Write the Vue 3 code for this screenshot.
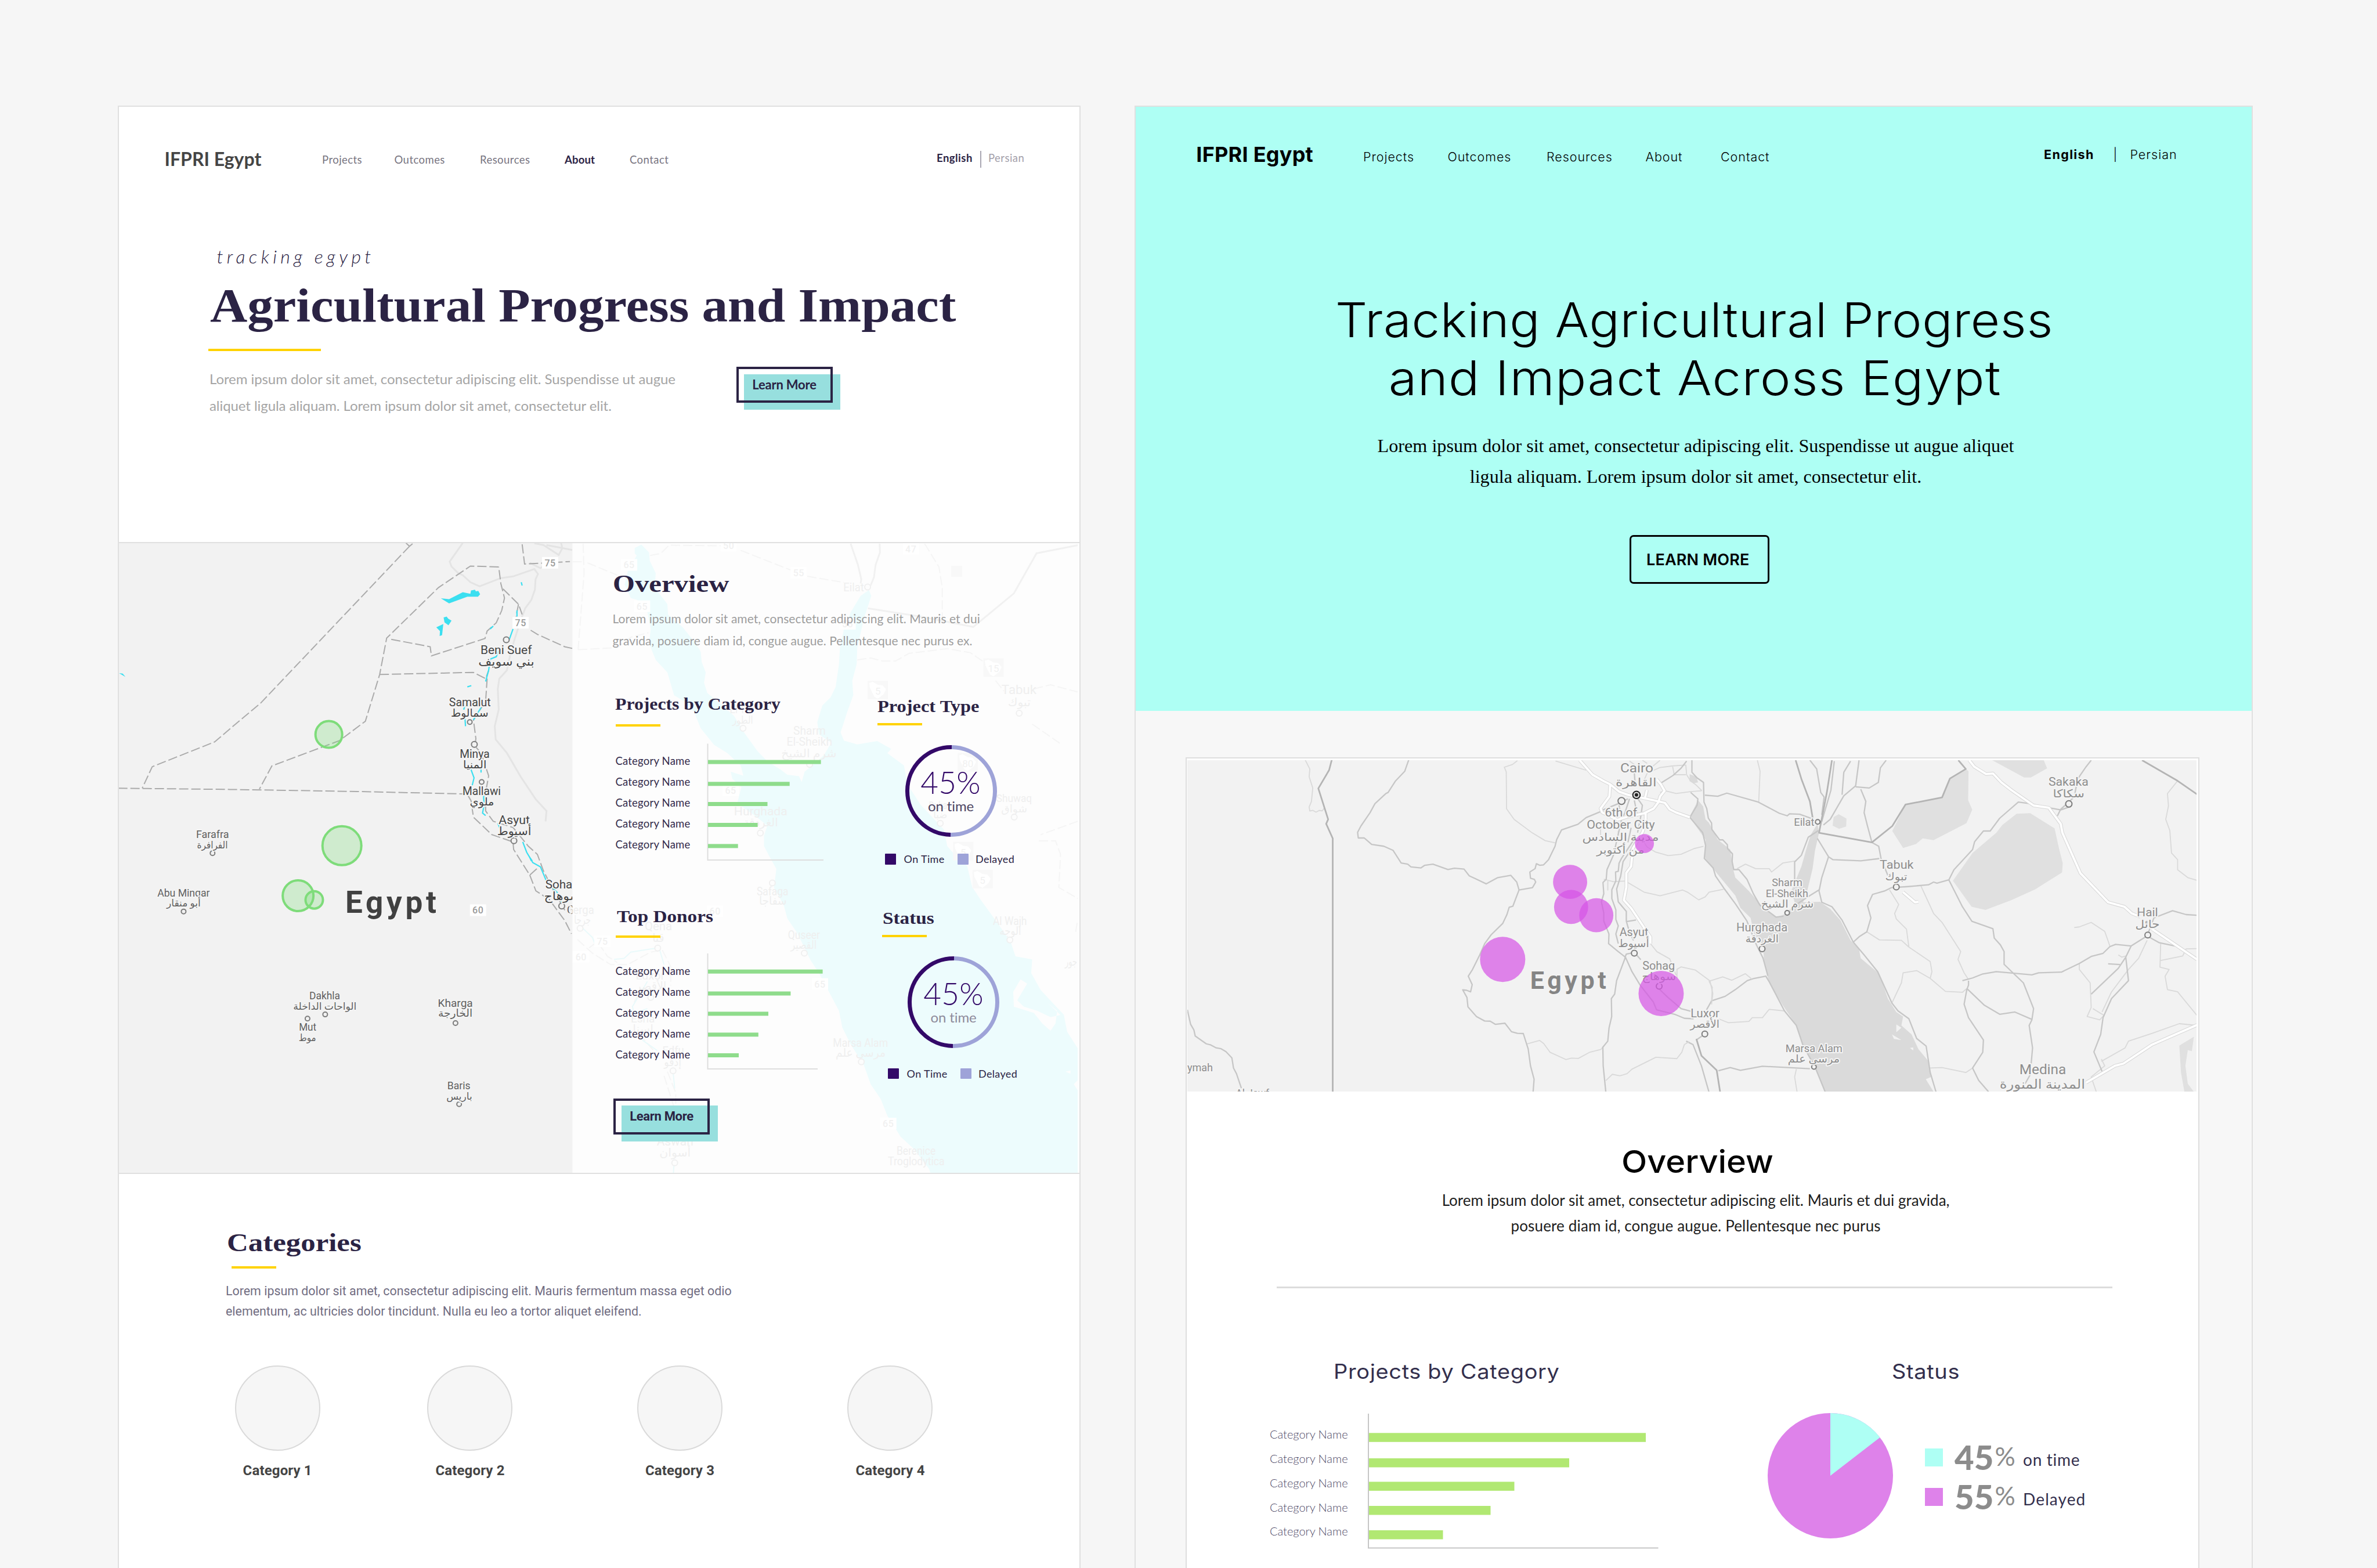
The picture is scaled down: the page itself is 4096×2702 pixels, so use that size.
<script setup>
const nav = ['Projects', 'Outcomes', 'Resources', 'About', 'Contact']

const categoryChart = {
  axis: [1.6, 202, 363],
  rows: [[37.6, 29.6, 194.6], [74, 67.3, 140.7], [110, 102, 102.5], [146, 138, 85.6], [182.3, 174.4, 51.7]],
}
const donorChart = {
  axis: [2, 201, 353],
  rows: [[38.7, 29.7, 197.6], [74.5, 67.5, 142.4], [110.6, 102.4, 104], [146.7, 138.4, 86.8], [182.9, 174, 53]],
}
const projectRows = [[49.3, 39.3, 477.5], [90.8, 83, 345.5], [132.9, 123.4, 251], [175, 165, 210], [216.4, 207, 128]]
const categories = ['Category 1', 'Category 2', 'Category 3', 'Category 4']

// Map tiles: origin x, origin y, scale x, scale y
const tiles = {
  west: [186.3, 923.5, 0.5246, 0.7127],
  north: [977.8, 923.5, 0.5741, 0.35634],
  south: [977.8, 1474.5, 0.5741, 0.36129],
  libya: [2033.3, 1288.2, 0.56422, 0.38605],
  arabia: [2902.4, 1288.2, 0.58402, 0.38605],
  nile: [2638.6, 1296, 0.27716, 0.27716],
}
const tf = (t) => `translate(${tiles[t][0]} ${tiles[t][1]}) scale(${tiles[t][2]} ${tiles[t][3]})`
const px = (t, x) => tiles[t][0] + x * tiles[t][2]
const py = (t, y) => tiles[t][1] + y * tiles[t][3]
const label = (t, [text, x1, x2, y, size = 20, cls = '']) => ({
  text, cls, size, x: px(t, x1), y: py(t, y), w: (x2 - x1) * tiles[t][2],
})
const dot = (t, [x, y, r = 5]) => ({ x: px(t, x), y: py(t, y), r })

const westLabels = [
  ['Beni Suef', 1223, 1392, 286, 21], ['بني سويف', 1216, 1400, 313, 20],
  ['Samalut', 1120, 1257, 412], ['سمالوط', 1126, 1249, 437, 19],
  ['Minya', 1155, 1253, 537], ['المنيا', 1166, 1243, 562, 19],
  ['Mallawi', 1164, 1290, 627], ['ملوي', 1188, 1268, 652, 19],
  ['Asyut', 1283, 1385, 696, 21], ['أسيوط', 1278, 1390, 723, 20],
  ['Farafra', 289, 397, 731, 18, 'minor'], ['الفرافرة', 292, 393, 755, 17, 'minor'],
  ['Abu Minqar', 162, 334, 872, 18, 'minor'], ['أبو منقار', 192, 304, 896, 17, 'minor'],
  ['Dakhla', 661, 762, 1121, 18, 'minor'], ['الواحات الداخلة', 608, 816, 1145, 17, 'minor'],
  ['Mut', 627, 684, 1196, 18, 'minor'], ['موط', 626, 683, 1221, 17, 'minor'],
  ['Kharga', 1083, 1198, 1138, 19, 'minor'], ['الخارجة', 1084, 1197, 1163, 18, 'minor'],
  ['Baris', 1114, 1190, 1338, 18, 'minor'], ['باريس', 1111, 1196, 1363, 17, 'minor'],
  ['Sohag', 1436, 1547, 852, 21], ['سوهاج', 1432, 1552, 880, 20], ['Gerga', 1507, 1600, 914],
].map((l) => label('west', l))
const westDots = [[1308, 251], [1188, 450, 4], [1203, 504], [1227, 595, 4], [1333, 737], [343, 767, 4], [248, 908, 4], [713, 1157, 4], [655, 1167, 4], [1141, 1178, 4], [1153, 1374, 4], [1490, 895]].map((d) => dot('west', d))
const westBadges = [['75', 1452, 65], ['75', 1355, 210], ['60', 1215, 905]].map(([n, x, y]) => ({ n, x: px('west', x), y: py('west', y) }))
const greenPins = [[725, 480, 23], [768, 749, 33.5], [624, 870, 26.5], [677, 880, 15]].map((d) => dot('west', d))

const faintLabels = [
  ...[
    ['Eilat', 828, 890, 267], ['Tabuk', 1303, 1408, 764, 22], ['تبوك', 1322, 1390, 825],
    ['El Tor', 487, 560, 858, 18], ['الطور', 495, 557, 908, 18],
    ['Sharm', 678, 775, 960], ['El-Sheikh', 658, 795, 1015], ['شرم الشيخ', 642, 808, 1070],
    ['Hurghada', 500, 660, 1350, 21], ['الغردقة', 528, 632, 1405],
    ['Duba', 1085, 1140, 1320, 18], ['ضبا', 1098, 1140, 1365, 18],
    ['Shuwaq', 1287, 1394, 1288, 18], ['شواق', 1302, 1380, 1338, 18],
  ].map((l) => label('north', l)),
  ...[
    ['Safaga', 568, 663, 190], ['سفاجا', 575, 658, 235], ['Quseer', 662, 758, 397], ['القصير', 670, 748, 443],
    ['Qena', 232, 314, 355, 21], ['قنا', 255, 290, 412], ['Luxor', 205, 292, 590, 21], ['الأقصر', 205, 297, 640],
    ['Esna', 190, 262, 797, 19], ['إسنا', 196, 258, 845], ['Edfu', 285, 350, 945, 19], ['إدفو', 290, 342, 1002],
    ['Marsa Alam', 797, 962, 912], ['مرسى علم', 805, 955, 960], ['Al Wajh', 1277, 1379, 332], ['الوجه', 1297, 1362, 378],
    ['Aswan', 268, 378, 1382, 21], ['أسوان', 276, 370, 1435], ['Berenice', 988, 1105, 1428], ['Troglodytica', 962, 1132, 1477],
    ['Gerga', -5, 80, 277], ['جرجا', 20, 70, 325], ['جور', 1493, 1530, 525],
  ].map((l) => label('south', l)),
]
const faintDots = [
  ...[[901, 247], [1356, 857], [527, 930], [727, 1105], [579, 1437], [1119, 1390], [1341, 1360]].map((d) => dot('north', d)),
  ...[[615, 130], [711, 465], [271, 441], [250, 676], [317, 1026], [882, 983], [1328, 402], [322, 1465], [38, 347]].map((d) => dot('south', d)),
]
const faintBadges = [
  ...[['65', 185, 140], ['65', 224, 340], ['50', 484, 46], ['55', 694, 178], ['47', 1031, 62], ['55', 841, 425], ['65', 490, 1230]].map(([n, x, y]) => ({ n, x: px('north', x), y: py('north', y) })),
  ...[['60', 443, 265], ['75', 105, 408], ['60', 41, 482], ['65', 758, 612], ['65', 963, 1278]].map(([n, x, y]) => ({ n, x: px('south', x), y: py('south', y) })),
]
const shields = [
  ...[['15', 1279, 637], ['5', 932, 745], ['80', 1202, 1095], ['5', 1188, 1524]].map(([n, x, y]) => ({ n, x: px('north', x), y: py('north', y) })),
  ...[['5', 1246, 112]].map(([n, x, y]) => ({ n, x: px('south', x), y: py('south', y) })),
]

const eastLabels = [
  ...[
    ['Cairo', 1344, 1445, 111, 22], ['القاهرة', 1330, 1455, 172, 20], ['6th of', 1297, 1396, 307], ['October City', 1242, 1450, 361],
    ['مدينة السادس', 1228, 1462, 416, 19], ['من أكتوبر', 1272, 1418, 472, 19],
    ['Asyut', 1342, 1430, 841], ['أسيوط', 1338, 1432, 891, 19], ['Sohag', 1412, 1511, 990], ['سوهاج', 1410, 1515, 1038, 19],
    ['ymah', 22, 100, 1445, 19], ['Al Jawf', 170, 272, 1558, 19],
  ].map((l) => label('libya', l)),
  ...[
    ['Eilat', 323, 383, 349, 19], ['Sharm', 258, 348, 619, 19], ['El-Sheikh', 240, 365, 667, 19], ['شرم الشيخ', 226, 381, 714, 19],
    ['Hurghada', 153, 304, 821], ['الغردقة', 180, 278, 870, 19], ['Tabuk', 576, 676, 540, 21], ['تبوك', 592, 657, 592, 19],
    ['Sakaka', 1074, 1192, 169, 21], ['سكاكا', 1087, 1180, 221, 19], ['Hail', 1335, 1397, 752, 21], ['حائل', 1330, 1402, 805, 19],
    ['Luxor', 18, 103, 1203], ['الأقصر', 17, 103, 1251, 19], ['Marsa Alam', 298, 466, 1358, 19], ['مرسى علم', 305, 458, 1405, 19],
    ['Medina', 988, 1126, 1458, 23], ['المدينة المنورة', 930, 1182, 1521, 22],
  ].map((l) => label('arabia', l)),
]
const eastDots = [
  ...[[1348, 238, 6], [1387, 917], [1463, 1065]].map((d) => dot('libya', d)),
  ...[[393, 331, 4], [303, 737, 4], [229, 898], [625, 622], [1134, 251, 5.5], [1367, 836], [60, 1278], [382, 1425, 4]].map((d) => dot('arabia', d)),
]
const pinkPins = [[1418, 428, 16.4], [1191, 599, 29.4], [1194, 711, 29.4], [1271, 748, 29.4], [985, 945, 39], [1469, 1097, 39]].map((d) => dot('libya', d))
</script>

<template>
  <main class="page">
    <article class="board board-left">
      <section class="hero">
        <header class="top">
          <strong class="logo">IFPRI Egypt</strong>
          <nav class="links">
            <a v-for="n in nav" :key="n" :class="{ active: n === 'About' }">{{ n }}</a>
          </nav>
          <div class="lang"><b>English</b><i></i><span>Persian</span></div>
        </header>
        <p class="tagline">tracking egypt</p>
        <h1>Agricultural Progress and Impact</h1>
        <div class="rule wide"></div>
        <div class="intro">
          <p>Lorem ipsum dolor sit amet, consectetur adipiscing elit. Suspendisse ut augue<br />aliquet ligula aliquam. Lorem ipsum dolor sit amet, consectetur elit.</p>
          <a class="offset-btn"><span>Learn More</span></a>
        </div>
      </section>

      <section class="overview">
        <svg class="map" viewBox="205 936 1655 1085" width="1655" height="1085">
          <rect x="205" y="936" width="1655" height="1085" fill="#f2f2f2" />
          <g :transform="tf('west')" class="geo">
            <g class="road-soft">
              <path d="M1165 17L1122 62L1128 74L1150 90L1165 95L1190 112L1220 122L1290 102L1330 98L1400 80L1412 92L1404 105L1402 130L1390 155L1370 175L1355 205L1335 250L1320 290L1310 325L1285 345L1280 370L1283 420L1270 460L1273 492L1310 525L1355 582L1405 637L1440 665L1437 690" />
              <path d="M1400 18L1430 22L1480 46L1492 30L1488 17M1440 22L1525 34M1385 65L1420 78L1455 60" />
            </g>
            <g class="dash">
              <path d="M978 17L990 25L1000 19M990 25L500 405L430 448L350 498L145 558L112 610" />
              <path d="M33 610L400 613L820 618L1180 624" />
              <path d="M1283 75L1190 73L1085 125L915 247L892 335L845 448L760 495L538 556L497 612" />
              <path d="M930 250L1058 268L1062 290L1238 248L1245 230L1275 210L1293 180L1302 150L1290 115L1283 75" />
              <path d="M892 335L1200 330L1240 345L1250 325" />
              <path d="M1297 128L1348 165L1360 190M1348 165L1340 195" />
              <path d="M1360 20L1368 68L1517 62" />
              <path d="M1388 228L1410 238L1500 268L1525 272" />
              <path d="M1245 345L1240 400L1200 445L1208 490L1205 508L1225 525L1250 580L1240 620L1240 665L1265 690L1330 705L1380 750L1410 770L1430 810L1465 860L1500 905" />
              <path d="M1180 625L1192 640L1200 680L1260 722L1330 740L1332 758L1385 820L1415 800M1385 820L1405 858L1450 880L1500 930L1522 962" />
            </g>
            <g class="river">
              <path d="M1343 180V195M1330 225L1318 250M1285 275L1275 292L1255 298L1250 325L1240 352M1225 415L1200 445M1192 565L1202 585L1196 603M1233 625L1235 650L1230 670L1240 676M1280 695L1290 712M1362 740L1375 765L1395 790L1420 800L1440 835L1475 862L1490 885M1172 440L1174 460M1168 420L1172 410M1225 565V572M1180 365L1193 362M1357 112L1360 120M1255 225L1265 218" />
            </g>
            <path d="M1093 151L1120 153L1165 136L1190 140L1192 132L1205 130L1208 134L1216 133L1222 141L1215 147L1180 147L1120 163ZM1102 197L1112 195L1117 200L1128 205L1118 216L1105 209ZM1078 221L1101 213L1097 240L1089 242L1090 230ZM36 332L48 333L57 341ZM1378 768L1395 785L1388 786Z" fill="#3bdff0" />
          </g>
          <g class="badge" v-for="(b, i) in westBadges" :key="'wb' + i">
            <rect :x="b.x - 14" :y="b.y - 10" width="28" height="20" />
            <text :x="b.x" :y="b.y + 6">{{ b.n }}</text>
          </g>
          <circle v-for="(d, i) in westDots" :key="'wd' + i" class="ring" :cx="d.x" :cy="d.y" :r="d.r" />
          <g class="labels west">
            <text v-for="l in westLabels" :key="l.text" :class="l.cls" :x="l.x" :y="l.y" :font-size="l.size" :textLength="l.w" lengthAdjust="spacingAndGlyphs">{{ l.text }}</text>
            <text class="country" x="595" y="1573" font-size="53" textLength="157">Egypt</text>
          </g>
          <circle v-for="(p, i) in greenPins" :key="'gp' + i" class="green-pin" :cx="p.x" :cy="p.y" :r="p.r" />

          <rect x="986.3" y="936" width="874" height="1085" fill="#fdfdfd" />
          <g class="faint">
            <g :transform="tf('north')" class="geo">
              <path class="sea" d="M222 42L202 58L202 85L208 95L182 165L172 235L190 300L210 310L240 370L250 450L245 520L265 600L300 660L320 770L350 800L380 850L400 930L440 1010L480 1050L520 1110L528 1160L490 1140L495 1175L522 1215L510 1290L525 1310L560 1350L600 1400L590 1450L590 1500L605 1546L627 1610L620 1700L650 1790L660 1850L690 1921L730 2053L755 2114L785 2205L815 2296L825 2377L850 2458L890 2560L910 2651L940 2722L960 2803L1000 2905L1040 2965L1085 3060L1090 3082H1532V2479L1500 2398L1490 2316L1420 2195L1392 2114L1395 2048L1345 2033L1330 1962L1290 1870L1240 1759L1215 1698L1200 1597L1165 1546L1140 1500L1130 1420L1060 1300L1020 1200L1010 1110L960 1050L972 1030L930 992L870 1008L830 990L820 950L840 850L858 770L855 700L868 620L870 540L880 470L890 400L912 290L905 262L880 290L850 370L830 450L818 540L815 620L805 730L790 780L765 820L750 900L755 960L792 1000L770 1060L735 1110L712 1140L703 1190L695 1162L660 1155L640 1130L600 1090L570 1040L530 950L500 870L450 800L420 760L410 710L415 660L403 610L400 560L385 520L345 440L302 380L300 330L262 250L265 180L247 120L245 80Z" />
              <path d="M850 37L872 140L882 210L880 230M937 37L938 80L925 140L920 200L910 240M902 350L1060 390L1218 440L1340 278L1408 84L1532 45" class="border" />
              <path class="faint-dash" d="M47 37L50 180L32 550M32 550L150 540L190 490L243 468M248 95L280 85L305 45L460 48M520 70L670 165M720 195L830 225M870 600L910 590L945 605H985L1025 568L1140 545L1210 565L1250 610M1072 37L1115 150L1125 250V400M1285 700L1310 750M1400 740L1450 720L1532 755M1395 910L1480 1005M1532 1380L1420 1445M1415 1475H1465L1480 1540L1475 1700L1532 1753M15 125H50M60 130L150 190" />
            </g>
            <g :transform="tf('south')" class="geo">
              <path class="faint-dash" d="M30 400L75 465L130 520H180L250 460L285 450M65 440L90 410L120 480L150 510M285 450L310 530V620M200 700L220 640M215 850L270 950M300 1030L325 1130V1280M290 1050L320 1200M1530 320L1525 370" />
              <path class="faint-river" d="M45 345L75 390L85 430M140 495L170 490L190 460L250 445L275 440L290 520M240 600L195 720L200 750L240 730M225 880L270 930M317 1030L322 1110M320 1470L318 1515" />
              <path d="M1338 650L1360 590L1380 610L1350 690L1370 720L1410 740L1450 770L1480 760L1440 700L1470 740L1465 800L1450 835L1425 800L1400 750L1340 720ZM1520 1090L1532 1070V1120ZM1495 1030L1510 1025V1040Z" fill="#fdfdfd" />
            </g>
            <circle v-for="(d, i) in faintDots" :key="'fd' + i" class="ring" :cx="d.x" :cy="d.y" :r="d.r" />
            <text v-for="l in faintLabels" :key="l.text + l.y" :x="l.x" :y="l.y" :font-size="l.size" :textLength="l.w" lengthAdjust="spacingAndGlyphs">{{ l.text }}</text>
            <g class="badge" v-for="(b, i) in faintBadges" :key="'fb' + i">
              <rect :x="b.x - 14" :y="b.y - 10" width="28" height="20" />
              <text :x="b.x" :y="b.y + 6">{{ b.n }}</text>
            </g>
            <g class="shield" v-for="(b, i) in shields" :key="'sh' + i">
              <rect :x="b.x - 17.5" :y="b.y - 16" width="35" height="32" />
              <path :d="`M${b.x - 15} ${b.y - 12}l6 -2l9 5l8 1l6 7l-4 8l-10 8l-6 -3l-8 -16z`" />
              <text :x="b.x" :y="b.y + 8">{{ b.n }}</text>
            </g>
            <rect x="1639" y="975" width="19" height="19" fill="#f8f8f8" />
          </g>
          <rect x="1857.4" y="936" width="3" height="1085" fill="#fff" />
        </svg>

        <div class="panel">
          <h2>Overview</h2>
          <p class="blurb">Lorem ipsum dolor sit amet, consectetur adipiscing elit. Mauris et dui<br />gravida, posuere diam id, congue augue. Pellentesque nec purus ex.</p>
          <div class="columns">
            <div class="charts">
              <h3 class="by-category">Projects by Category</h3>
              <div class="rule"></div>
              <svg class="bars first" width="380" height="206">
                <path :d="`M163.5 ${categoryChart.axis[0]}V${categoryChart.axis[1]}H${categoryChart.axis[2]}`" class="axis" />
                <g v-for="r in categoryChart.rows" :key="r[0]">
                  <text x="4.5" :y="r[0]">Category Name</text>
                  <rect x="164" :y="r[1]" :width="r[2]" height="7" />
                </g>
              </svg>
              <h3 class="donors">Top Donors</h3>
              <div class="rule donors-rule"></div>
              <svg class="bars second" width="380" height="206">
                <path :d="`M163.5 ${donorChart.axis[0]}V${donorChart.axis[1]}H${donorChart.axis[2]}`" class="axis" />
                <g v-for="r in donorChart.rows" :key="r[0]">
                  <text x="4.5" :y="r[0]">Category Name</text>
                  <rect x="164" :y="r[1]" :width="r[2]" height="7" />
                </g>
              </svg>
              <a class="offset-btn roboto"><span>Learn More</span></a>
            </div>
            <div class="donuts">
              <h3 class="type">Project Type</h3>
              <div class="rule"></div>
              <svg class="donut" width="160" height="160">
                <path d="M80 4.5A75.5 75.5 0 0 0 78 155.5" stroke="#330968" />
                <path d="M80 4.5A75.5 75.5 0 1 1 78 155.5" stroke="#9ea3d8" />
                <text x="78" y="84.5" class="pct">45%</text>
                <text x="78.5" y="115">on time</text>
              </svg>
              <div class="legend"><i></i><span>On Time</span><i class="late"></i><span>Delayed</span></div>
              <h3 class="status">Status</h3>
              <div class="rule status-rule"></div>
              <svg class="donut lower" width="160" height="160">
                <path d="M80 4.5A75.5 75.5 0 0 0 78 155.5" stroke="#330968" />
                <path d="M80 4.5A75.5 75.5 0 1 1 78 155.5" stroke="#9ea3d8" />
                <text x="79" y="84.5" class="pct">45%</text>
                <text x="79" y="115" class="muted">on time</text>
              </svg>
              <div class="legend lower"><i></i><span>On Time</span><i class="late"></i><span>Delayed</span></div>
            </div>
          </div>
        </div>
      </section>

      <section class="categories">
        <h2>Categories</h2>
        <div class="rule"></div>
        <p>Lorem ipsum dolor sit amet, consectetur adipiscing elit. Mauris fermentum massa eget odio<br />elementum, ac ultricies dolor tincidunt. Nulla eu leo a tortor aliquet eleifend.</p>
        <div class="circles">
          <figure v-for="c in categories" :key="c"><i></i><figcaption>{{ c }}</figcaption></figure>
        </div>
      </section>
    </article>

    <article class="board board-right">
      <section class="mint">
        <header class="top">
          <strong class="logo">IFPRI Egypt</strong>
          <nav class="links"><a v-for="n in nav" :key="n">{{ n }}</a></nav>
          <div class="lang"><b>English</b><em>|</em><span>Persian</span></div>
        </header>
        <h1><span>Tracking Agricultural Progress</span><span class="l2">and Impact Across Egypt</span></h1>
        <p>Lorem ipsum dolor sit amet, consectetur adipiscing elit. Suspendisse ut augue aliquet<br />ligula aliquam. Lorem ipsum dolor sit amet, consectetur elit.</p>
        <a class="outline-btn">LEARN MORE</a>
      </section>

      <section class="card">
        <svg class="east" viewBox="2045.7 1309.8 1739.7 571.4" width="1739.7" height="571.4">
          <rect x="2045" y="1309" width="1742" height="574" fill="#f2f2f2" />
          <g :transform="tf('arabia')" class="geo">
            <path fill="#e0e0e0" d="M908 56H1060L1070 92L1022 133H1002ZM830 95L838 105L837 235L849 277L832 337L735 413L703 405L683 430L645 448L613 372L652 254L760 222L783 138ZM980 295L1020 292L1092 360L1105 450L1116 515L1114 557L1035 632L965 680L888 724L847 710L792 594L850 470L920 380L938 345ZM440 310L455 297L478 316L477 352L456 362L437 348ZM1460 1330L1503 1290L1497 1355L1485 1350L1478 1420L1485 1500L1503 1536H1475L1465 1450Z" />
            <path fill="#dadada" d="M15 118L35 130L40 155L28 158L15 150ZM40 235L55 262L62 320L72 335L98 410L135 455L143 540L150 580L190 640L225 700L270 757L303 740L325 690L315 640L345 530L360 450L372 390L392 340L397 380L385 460L378 540L362 640L350 690L400 688L430 720L460 770L490 860L515 900L520 940L575 1010L600 1120L625 1180L645 1200L640 1240L670 1280L690 1345L720 1400L727 1470L712 1480L735 1536H415L385 1425L345 1310L330 1240L290 1150L250 1050L235 960L232 890L205 830L195 760L165 715L150 660L95 560L60 490L62 410L15 310Z" />
            <path fill="#f2f2f2" d="M625 1235L640 1250L625 1270ZM612 1280L640 1305L618 1300ZM665 1340L675 1338V1352Z" />
            <g class="road-light">
              <path d="M215 56L223 105L219 243M1365 860L1340 940L1310 990L1260 1090L1232 1180M1165 963V990L1197 1050L1200 1160L1188 1200L1225 1215L1238 1195L1205 1165M1150 803L1165 800L1200 780L1240 820L1255 885M1455 148L1425 205L1428 260L1420 320L1432 370L1437 470L1455 500V545L1485 580L1512 592M1405 875L1403 980L1430 990L1418 1020L1425 1080L1455 1090L1512 1195M1405 950L1470 930L1480 898L1512 897" />
              <path d="M605 635L632 700L620 740L625 765L655 810L662 890L725 955L730 1000L725 1030L770 1088L820 1092L833 1075M538 822L575 858L640 860L662 890M612 1140L640 1050L645 1005L685 995L725 1030M697 615L735 740L760 780L815 910L807 945L825 1005L838 1035M725 1430L760 1428L830 1450L850 1430M155 540L180 520L210 540L250 540L257 555L290 515L330 505" />
              <path d="M72 1042L82 1070L80 1130M100 1210L130 1228L190 1222L200 1205L230 1205L250 1168L295 1175M330 1435L325 1470L332 1536M1230 1400L1300 1340L1310 1310L1380 1275L1460 1232L1512 1240M1230 1390L1240 1420L1200 1470L1215 1536M1280 925L1290 935L1302 930" />
            </g>
            <g class="road-mid">
              <path d="M60 212L98 217L125 203L218 243L280 293L303 304L310 295L340 297L378 318M370 56L390 95L402 200L412 220L405 300M515 56L505 170L470 215L430 320L410 345M595 56L578 90L572 155L545 180L505 175M520 185L535 240L530 290L540 350L553 423L573 440L580 495L600 570M490 60L470 110L465 210M442 60L432 190L405 330M392 405L425 487L438 500L520 505L575 495M425 487L405 580L397 640L405 690L435 710L465 770L498 868L530 925L570 1000L612 1140L630 1175L662 1210L685 1298L713 1332L725 1450L742 1536M325 600V510L345 480L365 400L395 370M330 700L370 660L397 635" />
              <path d="M498 868L517 842L538 822L550 760L540 705L555 655L590 640L610 625L660 620L720 612L735 600L745 605L780 590L795 545L850 455L856 420L882 372H902L930 315L985 243L1020 250L1075 268L1110 278L1135 265M780 590L820 710L848 775L910 808L914 850L932 880L943 910V967L1000 1050L1030 1165L1025 1215L1017 1240L1027 1340L1020 1460L1005 1500M1100 305L1110 275L1150 220L1160 140L1185 85L1200 56" />
              <path d="M820 1040L850 1028L880 1010L920 1000L1025 1014L1045 1005L1112 1002L1165 963L1200 932L1235 918L1255 888L1272 878L1318 885L1365 840L1385 760L1440 728L1480 745L1512 748M838 1040V1060L833 1080L825 1145L838 1205L882 1305L880 1360L850 1430L868 1485L897 1536M833 1075L885 1150L930 1190L975 1180L1025 1213M1318 885L1302 935L1280 985L1200 1100M1250 965L1285 968M1302 935L1310 1040L1260 1120L1235 1205L1228 1280L1208 1358L1232 1445M1370 845L1400 870L1447 885" />
              <path d="M65 1170L80 1130L120 1110L150 1080L185 1040L205 1030L240 1020L250 1045L295 1175L330 1240L350 1330L385 1425L415 1536M100 1442L135 1428L165 1440L230 1422L370 1433M5 1310L25 1325L50 1420L72 1536M60 1278L35 1305" />
            </g>
            <path class="road-strong" d="M328 56L345 140L370 240L380 330M435 56L420 200L397 380L553 423L613 350L652 254L760 222L783 138L830 95L808 56M1350 56L1455 148L1512 208M35 1300L50 1375L95 1440L105 1536" />
            <path class="casing" d="M840 56L855 85L890 118L910 115L935 155L965 190L1030 258L1075 268L1110 340L1115 380L1168 560L1250 690L1298 710L1320 740L1345 755M1380 810L1512 945M1512 1238L1380 1325L1295 1410L1270 1420L1185 1495M645 645L680 690L690 688" />
            <path class="white-road" d="M840 56L855 85L890 118L910 115L935 155L965 190L1030 258L1075 268L1110 340L1115 380L1168 560L1250 690L1298 710L1320 740L1345 755M1380 810L1512 945M1512 1238L1380 1325L1295 1410L1270 1420L1185 1495M645 645L680 690L690 688" />
          </g>
          <g :transform="tf('libya')" class="geo">
            <path class="road-light" d="M382 55L396 95L394 130L405 180L401 240L394 265L396 283L405 280L415 288L425 280L434 282L440 270M1030 58L1015 75L990 87L996 108L997 273L1020 320L1075 380L1115 415L1145 425M1058 1323L1098 1307L1110 1320L1130 1360L1178 1392L1195 1386L1216 1387L1250 1360L1285 1347L1292 1335M1300 1486L1320 1458L1343 1465L1365 1455L1380 1435L1453 1382L1517 1388L1532 1360L1540 1325L1555 1312" />
            <path class="road-mid" d="M698 55L686 105L657 150L635 200L628 205L595 250L580 290L552 350L542 378L544 403H562L585 432L622 440L650 458L675 515L695 520L705 532L735 537L747 525L772 520L818 544L838 538L867 542L883 572L935 608L970 580L1010 570L1028 600L1035 635L1076 625L1086 600L1082 588L1070 583L1068 555L1084 540L1088 518L1098 525L1110 523L1125 500L1145 440L1150 410L1165 367L1215 342L1240 312L1285 285M1035 635L1016 708L1005 712L998 745L985 785L950 835L930 875L915 925L893 990L880 1020L892 1058L887 1090L875 1083L863 1081L876 1115L879 1157L905 1200L930 1220L947 1221L963 1235L992 1230L1012 1268L1030 1275L1048 1276L1063 1345L1070 1420L1081 1480L1078 1536M22 1170L32 1235L42 1260L46 1287L80 1322L92 1326L110 1340L125 1344L140 1357L158 1385L163 1430L172 1455L187 1520M1360 935L1333 1040L1327 1100L1317 1120L1318 1200L1310 1250L1306 1310L1291 1337L1292 1420L1300 1536M1360 935L1380 1000L1405 1060L1445 1135L1455 1170L1510 1190L1540 1208L1568 1210M1465 1080L1490 1115L1530 1165L1568 1180" />
            <path class="road-strong" d="M463 55L455 100L422 182L452 320L446 340L466 405V1536" />
          </g>
          <g :transform="tf('nile')" class="geo">
            <path class="road-light" d="M680 530L720 590L770 620L850 643L930 635L1010 600L1070 585M590 805L650 840L700 870L800 893L940 857L970 870L1040 918L1080 900L1105 870L1195 852M450 790L510 805L600 800M700 175L720 130L800 95L880 85L960 80L965 140L990 180L1020 200L1060 240M878 90L888 140H960M800 250L830 240L900 257L990 245L1060 240M740 1190L780 1240L860 1285L870 1310L905 1400V1350L930 1335L1020 1355L1110 1422L1128 1500L1120 1568M1110 1422L1190 1397L1245 1418L1330 1377L1370 1410M540 490V530M475 800V860M430 470V520M150 55L340 112M610 55L700 120M690 50L720 70M800 50L740 100" />
            <path class="road-mid" d="M610 290L580 380L560 420L540 510L510 640L470 730L465 790L445 810L450 880L435 930L450 1000V1050L482 1130L480 1190L540 1240L585 1275M640 540L600 600L560 660L545 690L540 740L523 745L525 800L500 855V910L525 980V1040L540 1080L525 1130L540 1190M655 540L610 620L570 680L555 770L530 850L540 930L590 990V1050L610 1120L635 1170M590 1053L650 1043M655 280L690 330L680 400L660 500M640 130L645 200M560 430L545 330M640 300L660 400M620 470L600 560M638 1245L590 1255L580 1280M640 1245L680 1290M965 55L930 100L880 145L800 195M998 50V125L1030 160L1070 188L1073 310L1090 350L1100 410L1120 440L1122 480L1170 545H1190L1218 575L1220 600L1250 632L1248 680L1258 730H1290L1340 790L1380 880L1420 950L1520 1025L1568 1020M990 250L1035 290L1030 330L985 405L1065 500L1083 580L1075 660L1130 720L1145 770L1200 850L1270 945L1340 1050L1400 1200L1440 1280L1470 1390M430 365L540 320L600 290" />
            <path class="casing" d="M300 50L380 140L450 180L490 200L545 245L600 265L720 290L830 315L860 355L900 375L985 405M490 200L485 275L430 350L440 375L535 420L600 400L700 380L760 350L790 310L800 275L828 240L805 200L780 170M705 290L718 235M710 380V440L690 500L630 600L620 710L590 750V840L575 920L620 970L700 1090L740 1150V1190" />
            <path class="white-road" d="M300 50L380 140L450 180L490 200L545 245L600 265L720 290L830 315L860 355L900 375L985 405M490 200L485 275L430 350L440 375L535 420L600 400L700 380L760 350L790 310L800 275L828 240L805 200L780 170M705 290L718 235M710 380V440L690 500L630 600L620 710L590 750V840L575 920L620 970L700 1090L740 1150V1190" />
          </g>
          <circle v-for="(d, i) in eastDots" :key="'ed' + i" class="ring" :cx="d.x" :cy="d.y" :r="d.r" />
          <g class="labels">
            <text v-for="l in eastLabels" :key="l.text" :x="l.x" :y="l.y" :font-size="l.size" :textLength="l.w" lengthAdjust="spacingAndGlyphs">{{ l.text }}</text>
            <text class="country" x="2636.5" y="1704" font-size="43" textLength="131">Egypt</text>
          </g>
          <circle cx="2819.6" cy="1369.6" r="6.3" fill="#ddd" stroke="#222" stroke-width="2" />
          <circle cx="2819.6" cy="1369.6" r="3" fill="#222" />
          <circle v-for="(p, i) in pinkPins" :key="'pp' + i" class="pink-pin" :cx="p.x" :cy="p.y" :r="p.r" />
        </svg>
        <h2>Overview</h2>
        <p>Lorem ipsum dolor sit amet, consectetur adipiscing elit. Mauris et dui gravida,<br /><span>posuere diam id, congue augue. Pellentesque nec purus</span></p>
        <hr />
        <div class="stats">
          <div class="stat-bars">
            <h3>Projects by Category</h3>
            <svg width="700" height="250">
              <g v-for="r in projectRows" :key="r[0]">
                <text x="8" :y="r[0]">Category Name</text>
                <rect x="178.5" :y="r[1]" :width="r[2]" height="15.5" />
              </g>
              <path d="M178 6V237.5H677.5" />
            </svg>
          </div>
          <div class="stat-pie">
            <h3>Status</h3>
            <div class="pie-row">
              <svg width="220" height="220">
                <circle cx="110" cy="110" r="108" fill="#de82ea" />
                <path d="M110 110V2A108 108 0 0 1 195.5 44Z" fill="#aefff4" />
              </svg>
              <div class="pie-legend">
                <div><i></i><b>45</b><em>%</em><span>on time</span></div>
                <div><i class="late"></i><b>55</b><em>%</em><span class="delayed">Delayed</span></div>
              </div>
            </div>
          </div>
        </div>
      </section>
    </article>
  </main>
</template>

<style>
html, body { margin: 0; background: #f6f6f6; overflow: hidden; }
</style>

<style scoped>
.page { width: 4096px; height: 2702px; box-sizing: border-box; padding: 182px 0 0 203px; display: flex; gap: 93px; background: #f6f6f6; overflow: hidden; font-family: Lato, sans-serif; }
h1, h2, h3, p, figure { margin: 0; }
.board { box-sizing: border-box; flex: none; height: 2600px; border: 2px solid #e0e0e0; white-space: nowrap; }
.board-left { width: 1659px; background: #fff; color: #2b2344; }
.board-right { width: 1927px; background: #f7f7f7; color: #000; }
.board-left h1, .board-left h2, .board-left h3 { width: max-content; transform-origin: 0 50%; }
.top { display: flex; align-items: flex-start; line-height: 40px; }
.links { display: grid; }
.rule { width: 77px; height: 4px; background: #ffd200; }

/* left board */
.hero { box-sizing: border-box; height: 752px; border-bottom: 2px solid #e0e0e0; padding: 68px 0 0 154px; position: relative; }
.hero .top { height: 43px; margin-left: -75.5px; font-size: 18.5px; }
.hero .logo { width: 271.5px; margin-top: 1.5px; font-size: 32px; color: #444; }
.hero .links { width: 600px; margin-top: 3.3px; grid-template-columns: 124.5px 147.5px 146px 112px 70px; color: #77747f; letter-spacing: .45px; }
.hero .links .active { color: #2b2344; font-weight: 700; letter-spacing: .15px; }
.hero .lang { display: grid; grid-template-columns: 74.5px 14.5px 62px; margin: .3px 0 0 459px; letter-spacing: .47px; }
.hero .lang i { width: 2px; height: 29px; margin-top: 8px; background: #a9a6b2; }
.hero .lang span { color: #a3a0aa; }
.tagline { margin: 127.4px 0 0 14.5px; font: italic 300 32px/40px Lato, sans-serif; letter-spacing: 6.35px; }
.hero h1 { margin: 13.4px 0 0 3px; font: 700 83px/100px "Liberation Serif", serif; transform: scaleX(1.073); }
.rule.wide { width: 194px; margin-top: 25px; }
.intro { display: flex; align-items: flex-start; margin: 25.7px 0 0 2px; }
.intro p { width: 907.5px; font-size: 24px; line-height: 45.6px; letter-spacing: -.07px; color: #a5a5a5; }
.offset-btn { position: relative; display: flex; width: 166px; height: 61.4px; align-items: center; justify-content: center; font-weight: 700; font-size: 22px; line-height: 30px; letter-spacing: -.19px; z-index: 1; }
.offset-btn::before { content: ''; position: absolute; left: 13.5px; top: 12.3px; width: 166px; height: 61.4px; background: #97dfde; z-index: -2; }
.offset-btn::after { content: ''; position: absolute; inset: 0; border: 4px solid #2b2344; z-index: -1; }
.offset-btn.roboto { font-family: Roboto, sans-serif; letter-spacing: -.33px; }
.intro .offset-btn { margin-top: 2px; }

.overview { position: relative; box-sizing: border-box; height: 1087px; border-bottom: 2px solid #e0e0e0; }
.map { position: absolute; left: 0; top: 0; display: block; }
.geo path { vector-effect: non-scaling-stroke; }
.dash path, .river path, .road-soft path, .border, .faint-dash, .faint-river { fill: none; }
.dash path { stroke: #ababab; stroke-width: 2; stroke-dasharray: 16 5; }
.road-soft path { stroke: #e4e4e4; stroke-width: 3; }
.river path { stroke: #3bdff0; stroke-width: 2.2; }
.badge rect { fill: #fff; }
.badge text { font: 500 16px Roboto, sans-serif; fill: #9a9a9a; text-anchor: middle; letter-spacing: .5px; }
.ring { fill: #f2f2f2; stroke: #7d7d7d; stroke-width: 2; }
.labels text { font-family: Roboto, "DejaVu Sans", sans-serif; fill: #8e8e8e; paint-order: stroke; stroke: #f4f4f4; stroke-width: 4px; stroke-linejoin: round; }
.labels.west text { fill: #444; }
.labels.west .minor { fill: #606060; }
.labels .country { font-weight: 700; fill: #858585; }
.labels.west .country { fill: #414141; }
.green-pin { fill: rgba(126, 220, 122, .3); stroke: #7edc7a; stroke-width: 4; }
.pink-pin { fill: rgba(214, 82, 230, .7); }
.sea { fill: #edfcfd; }
.faint text { font-family: Roboto, "DejaVu Sans", sans-serif; fill: #efefef; }
.faint .border { stroke: #f1f1f1; stroke-width: 3; }
.faint-dash { stroke: #f5f5f5; stroke-width: 2; stroke-dasharray: 16 5; }
.faint-river { stroke: #eafafb; stroke-width: 2; }
.faint .ring { fill: #fdfdfd; stroke: #f0f0f0; }
.faint .badge text { fill: #f1f1f1; }
.shield rect { fill: #f8f8f8; }
.shield path { fill: #fff; }
.shield text { font-size: 17px; text-anchor: middle; fill: #f1f1f1; }

.panel { position: relative; padding: 44.9px 0 0 851px; }
.panel h2 { margin-left: 0; font: 700 43px/50px "Liberation Serif", serif; transform: scaleX(1.134); }
.blurb { margin: 16.3px 0 0 -.5px; font-size: 21px; line-height: 37.8px; letter-spacing: .05px; color: #9d9d9d; }
.columns { display: flex; }
.panel h3 { font: 700 30px/40px "Liberation Serif", serif; }
.charts { width: 455px; }
.charts .by-category { margin: 70.3px 0 0 4px; transform: scaleX(1.058); }
.charts .rule { margin: 14.9px 0 0 5px; }
.charts .donors { margin: 73.3px 0 0 7px; transform: scaleX(1.107); }
.charts .donors-rule { margin-top: 12.7px; }
.bars { display: block; }
.bars.first { margin-top: 28px; }
.bars.second { margin-top: 25px; }
.bars text { font-size: 18.5px; letter-spacing: .2px; fill: #332b4b; }
.bars rect { fill: #8fdc8c; }
.bars .axis { fill: none; stroke: #dedede; stroke-width: 2; }
.charts .offset-btn { margin: 46.2px 0 0 1px; }
.donuts .type { margin: 73.8px 0 0 1px; transform: scaleX(1.08); }
.donuts .rule { margin: 9px 0 0 1px; }
.donuts .status { margin: 71.9px 0 0 10px; transform: scaleX(1.107); }
.donuts .status-rule { margin: 8.8px 0 0 9px; }
.donut { display: block; margin: 33.4px 0 0 48.5px; }
.donut.lower { margin: 32.3px 0 0 52.5px; }
.donut path { fill: none; stroke-width: 7; }
.donut text { font-size: 24px; text-anchor: middle; fill: #4d4663; letter-spacing: -.1px; }
.donut .pct { font-size: 53px; font-weight: 300; fill: #330968; letter-spacing: .2px; }
.donut .muted { fill: #8e8b9b; }
.legend { display: grid; grid-template-columns: 32.6px 92.4px 31px 70px; margin: 28.5px 0 0 14px; height: 18.5px; font-size: 18px; line-height: 18.5px; letter-spacing: .35px; }
.legend.lower { margin: 33.9px 0 0 19px; }
.legend i { width: 19px; height: 18.5px; background: #330968; border-radius: 1px; }
.legend .late { background: #9ea3d8; }

.categories { padding: 93.3px 0 0 184px; }
.categories h2 { margin-left: 1.5px; font: 700 45px/50px "Liberation Serif", serif; transform: scaleX(1.131); }
.categories .rule { margin: 16px 0 0 10px; }
.categories p { margin-top: 22px; font: 400 21.4px/34.9px Roboto, sans-serif; color: #716d82; }
.circles { display: grid; grid-template-columns: 331.8px 361.5px 362.5px 147px; margin: 74.5px 0 0 15.7px; }
.circles figure { width: 147px; text-align: center; }
.circles i { display: block; box-sizing: border-box; width: 147px; height: 147px; border: 2px solid #dadada; border-radius: 50%; background: #f6f6f6; }
.circles figcaption { margin-top: 19px; font: 700 24px/30px Roboto, sans-serif; letter-spacing: .15px; color: #444; }

/* right board */
.mint { box-sizing: border-box; height: 1040.6px; padding-top: 61.5px; background: #aefff4; text-align: center; }
.mint .top { height: 45px; margin-left: 104.3px; text-align: left; font: 300 21.5px/40px Inter, sans-serif; }
.mint .logo { width: 287.7px; font-size: 36px; font-weight: 700; letter-spacing: .25px; }
.mint .links { margin-top: 4.6px; width: 706px; grid-template-columns: 145.5px 170.5px 170.5px 129.5px 90px; letter-spacing: .95px; }
.mint .lang { display: grid; grid-template-columns: 119.5px 29px 90px; margin: 0 0 0 467px; letter-spacing: 1px; }
.mint .lang b { font-weight: 700; letter-spacing: 1.38px; }
.mint .lang em { font-style: normal; }
.mint h1 { margin-top: 211.5px; font: 300 82px/99.8px Inter, sans-serif; }
.mint h1 span { display: block; padding-left: 2px; transform: scaleX(1.06); letter-spacing: .67px; }
.mint h1 .l2 { padding-left: 4px; transform: scaleX(1.08); letter-spacing: 1.2px; }
.mint p { margin: 40.8px 0 0 7px; font: 400 32.2px/52.6px "Liberation Serif", serif; }
.outline-btn { display: block; box-sizing: border-box; width: 241.5px; height: 84px; margin: 74.7px 0 0 850.5px; border: 3px solid #000; border-radius: 7px; padding-right: 5px; font: 600 27px/80px Inter, sans-serif; letter-spacing: .17px; }

.card { box-sizing: border-box; width: 1747px; height: 1500px; margin: 80.4px 0 0 85.5px; border: 2px solid #dedede; background: #fff; padding: 2.8px 0 0 1.2px; }
.east { display: block; }
.road-light, .road-mid, .road-strong, .casing, .white-road { fill: none; stroke-linejoin: round; }
.road-light { stroke: #d9d9d9; stroke-width: 1.8; }
.road-mid { stroke: #c6c6c6; stroke-width: 2.3; }
.road-strong { stroke: #b4b4b4; stroke-width: 2.8; }
.casing { stroke: #d9d9d9; stroke-width: 6; }
.white-road { stroke: #fff; stroke-width: 3.8; }
.card h2 { margin-top: 85.6px; padding-left: 15px; font: 500 54px/70px Inter, sans-serif; transform: scaleX(1.069); text-align: center; }
.card p { margin-top: 10.6px; padding-left: 11px; font-size: 26px; line-height: 43.6px; text-align: center; color: #1d1d1d; }
.card p span { letter-spacing: .15px; }
.card hr { width: 1440px; height: 3px; margin: 82.7px 0 0 154px; border: 0; background: #dcdcdc; }
.stats { display: flex; margin-top: 118px; color: #332f4d; }
.stats h3 { width: max-content; font: 400 35px/50px Inter, sans-serif; letter-spacing: .6px; transform: scaleX(1.085); transform-origin: 0 50%; }
.stat-bars { width: 864.4px; padding-left: 134.3px; }
.stat-bars h3 { margin-left: 118.5px; }
.stat-bars svg { display: block; margin-top: 42px; }
.stat-bars text { font-size: 20px; font-weight: 300; fill: #4d4866; }
.stat-bars rect { fill: #b1e872; }
.stat-bars path { fill: none; stroke: #c6c6c6; stroke-width: 2; }
.stat-pie h3 { margin-left: 216px; }
.pie-row { display: flex; margin-top: 45px; }
.pie-legend { margin: 57.6px 0 0 52.7px; }
.pie-legend div { display: grid; grid-template-columns: 51px 69.5px 48.5px auto; height: 68px; line-height: 40px; }
.pie-legend i { width: 31px; height: 31px; margin-top: 5px; background: #aefff4; }
.pie-legend .late { background: #de82ea; }
.pie-legend b { font-size: 58px; font-weight: 900; color: #8c8c8c; }
.pie-legend em { margin-top: -2.2px; font-size: 44px; font-style: normal; font-weight: 400; color: #8c8c8c; }
.pie-legend span { margin-top: 4px; font-size: 28px; letter-spacing: .7px; }
.pie-legend .delayed { letter-spacing: 1.1px; }
</style>
